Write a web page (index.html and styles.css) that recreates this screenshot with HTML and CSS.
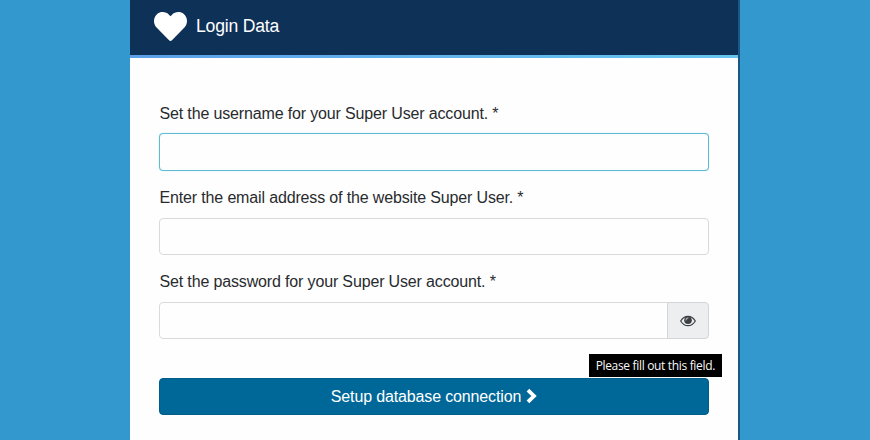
FILE: index.html
```html
<!DOCTYPE html>
<html lang="en">
<head>
  <meta charset="UTF-8" />
  <meta name="viewport" content="width=device-width, initial-scale=1.0"/>
  <title>Login Data</title>
  <link rel="stylesheet" href="styles.css">
</head>
<body>
  <div class="container">
    <div class="header">
      <svg class="heart" viewBox="0 0 512 512"><path fill="currentColor" d="M462.3 62.6C407.5 15.9 326 24.3 275.7 76.2L256 96.5l-19.7-20.3C186.1 24.3 104.500 15.900 49.700 62.600c-62.800 53.600-66.100 149.800-9.900 207.900l193.500 199.800c12.500 12.900 32.800 12.900 45.300 0l193.500-199.800c56.300-58.100 53-154.300-9.800-207.900z"/></svg>
      <h1>Login Data</h1>
    </div>

    <form class="login-form" novalidate onsubmit="return false">
      <div class="form-group">
        <label for="username">Set the username for your Super User account. *</label>
        <input type="text" id="username" class="form-control active" />
      </div>
      <div class="form-group">
        <label for="email">Enter the email address of the website Super User. *</label>
        <input type="email" id="email" class="form-control" />
      </div>
      <div class="form-group">
        <label for="password">Set the password for your Super User account. *</label>
        <div class="input-group">
          <input type="password" id="password" class="form-control" />
          <button type="button" class="toggle" aria-label="Show password" onclick="togglePassword()">
            <svg viewBox="0 0 16 12">
              <path d="M.7 6C2.500 2.900 5 1.300 8 1.300S13.500 2.900 15.300 6C13.500 9.100 11 10.700 8 10.700S2.500 9.100.7 6z" fill="none" stroke="currentColor" stroke-width="1.2"/>
              <circle cx="8" cy="5.200" r="3.800" fill="currentColor"/>
              <path d="M5.900 5A2.100 2.100 0 0 1 8 2.900" fill="none" stroke="#eceeef" stroke-width=".8" stroke-linecap="round"/>
            </svg>
          </button>
        </div>
      </div>

      <div class="submit-row">
        <button type="submit" class="btn">Setup database connection
          <svg viewBox="0 0 11 16"><path d="M1.900 2.100L8 8l-6.100 5.900" fill="none" stroke="currentColor" stroke-width="3.800"/></svg>
        </button>
        <div class="tooltip">Please fill out this field.</div>
      </div>
    </form>
  </div>

  <script>
    function togglePassword() {
      const field = document.getElementById("password");
      field.type = field.type === "password" ? "text" : "password";
    }
  </script>
</body>
</html>
```

FILE: styles.css
```css
* {
  margin: 0;
  padding: 0;
  box-sizing: border-box;
  font-family: "Liberation Sans", Arial, sans-serif;
}

body {
  background: #3298cd;
  height: 100vh;
  overflow: hidden;
  font-size: 16px;
  line-height: 24px;
  letter-spacing: -0.15px;
  color: #282b2e;
}

.container {
  width: 610px;
  height: 100%;
  margin-left: 130px;
  background: #fefefe;
  border-right: 2px solid #1c5685;
}

.header {
  height: 58px;
  padding: 0 24px 3px;
  display: flex;
  align-items: center;
  gap: 9px;
  background: linear-gradient(to right, #5c9fe8, #66c6ee) bottom / 100% 3px no-repeat, #0d3157;
  color: white;
}

.heart {
  width: 33px;
  height: 33px;
  margin-top: -3px;
}

h1 {
  font-size: 17.6px;
  font-weight: normal;
  letter-spacing: -0.2px;
  margin-top: -3px;
}

.login-form {
  padding: 43.7px 29px 0;
}

.form-group {
  margin-bottom: 15.45px;
}

label {
  display: block;
  margin-bottom: 7.6px;
  padding-left: 0.5px;
}

.form-control {
  display: block;
  width: 100%;
  height: 37.3px;
  padding: 6px 12px;
  font-size: 16px;
  background: #fefefe;
  border: 1px solid #d8dadc;
  border-radius: 4px;
  outline: none;
}

.form-control.active {
  border-color: #5fb9d3;
  box-shadow: 0 0 1px #8fd0e4;
}

.input-group {
  display: flex;
}

.input-group .form-control {
  flex: 1;
  border-radius: 4px 0 0 4px;
}

.toggle {
  width: 42px;
  height: 37.3px;
  margin-left: -1px;
  display: flex;
  align-items: center;
  justify-content: center;
  background: #eceeef;
  border: 1px solid #d3d6d8;
  border-radius: 0 4px 4px 0;
  color: #3c4045;
  cursor: pointer;
}

.toggle svg {
  width: 16px;
  height: 12px;
}

.submit-row {
  position: relative;
  padding-top: 23.2px;
}

.btn {
  width: 100%;
  height: 37px;
  padding-top: 1px;
  display: flex;
  align-items: center;
  justify-content: center;
  gap: 5px;
  font-size: 16px;
  letter-spacing: -0.14px;
  background: #006898;
  color: white;
  border: 1px solid #045c89;
  border-radius: 4px;
  cursor: pointer;
}

.btn svg {
  width: 11px;
  height: 16px;
  margin-top: -1px;
}

/* browser validation hint, sits over the button */
.tooltip {
  position: absolute;
  top: -1px;
  right: -13px;
  height: 23px;
  padding: 0 7px;
  line-height: 23px;
  font-family: "Open Sans", "Noto Sans", sans-serif;
  font-size: 12px;
  font-weight: 500;
  letter-spacing: -0.33px;
  white-space: nowrap;
  background: #000;
  color: #f8f8f8;
}
```
